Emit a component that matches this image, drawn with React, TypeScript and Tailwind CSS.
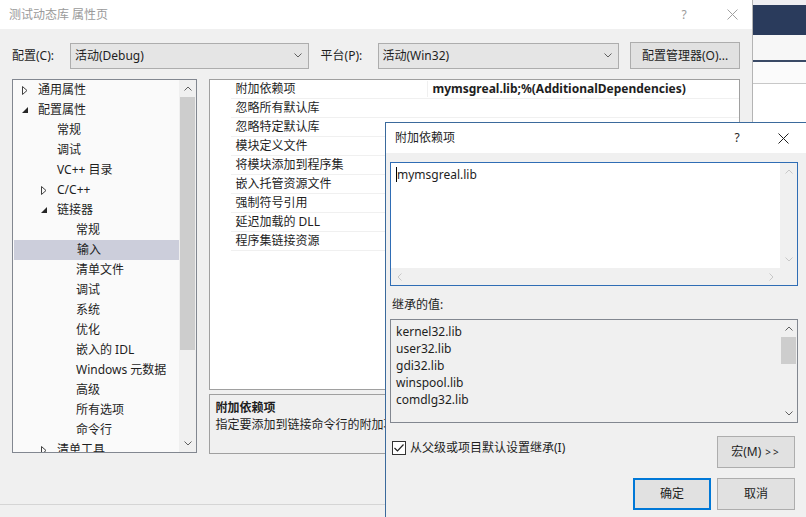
import { ReactNode } from 'react'

type TreeItem = {
    label: string
    level: 0 | 1 | 2
    state?: 'open' | 'closed'
    selected?: boolean
}

const treeItems: TreeItem[] = [
    { label: '通用属性', level: 0, state: 'closed' },
    { label: '配置属性', level: 0, state: 'open' },
    { label: '常规', level: 1 },
    { label: '调试', level: 1 },
    { label: 'VC++ 目录', level: 1 },
    { label: 'C/C++', level: 1, state: 'closed' },
    { label: '链接器', level: 1, state: 'open' },
    { label: '常规', level: 2 },
    { label: '输入', level: 2, selected: true },
    { label: '清单文件', level: 2 },
    { label: '调试', level: 2 },
    { label: '系统', level: 2 },
    { label: '优化', level: 2 },
    { label: '嵌入的 IDL', level: 2 },
    { label: 'Windows 元数据', level: 2 },
    { label: '高级', level: 2 },
    { label: '所有选项', level: 2 },
    { label: '命令行', level: 2 },
    { label: '清单工具', level: 1, state: 'closed' },
]

const indent = ['pl-[6px]', 'pl-[25px]', 'pl-[44px]']

const props = [
    '附加依赖项',
    '忽略所有默认库',
    '忽略特定默认库',
    '模块定义文件',
    '将模块添加到程序集',
    '嵌入托管资源文件',
    '强制符号引用',
    '延迟加载的 DLL',
    '程序集链接资源',
]

const inherited = ['kernel32.lib', 'user32.lib', 'gdi32.lib', 'winspool.lib', 'comdlg32.lib']

function Chevron({ dir, color = '#606060' }: { dir: 'up' | 'down' | 'left' | 'right'; color?: string }) {
    const d = {
        up: 'M0.5 4.5 L4 1 L7.5 4.5',
        down: 'M0.5 0.5 L4 4 L7.5 0.5',
        left: 'M4.5 0.5 L1 4 L4.5 7.5',
        right: 'M0.5 0.5 L4 4 L0.5 7.5',
    }[dir]
    const vertical = dir === 'up' || dir === 'down'
    return (
        <svg width={vertical ? 8 : 5} height={vertical ? 5 : 8} viewBox={vertical ? '0 0 8 5' : '0 0 5 8'}>
            <path d={d} fill="none" stroke={color} strokeWidth="1" />
        </svg>
    )
}

function CloseIcon({ color }: { color: string }) {
    return (
        <svg width="11" height="11" viewBox="0 0 11 11">
            <path d="M0.5 0.5 L10.5 10.5 M10.5 0.5 L0.5 10.5" stroke={color} strokeWidth="1" />
        </svg>
    )
}

function TreeArrow({ state }: { state?: 'open' | 'closed' }) {
    if (state === 'closed')
        return (
            <svg width="6" height="9" viewBox="0 0 6 9">
                <path d="M0.5 0.5 L5 4.5 L0.5 8.5 Z" fill="none" stroke="#404040" strokeWidth="1" />
            </svg>
        )
    if (state === 'open')
        return (
            <svg width="6" height="6" viewBox="0 0 6 6">
                <path d="M6 0 L6 6 L0 6 Z" fill="#262626" />
            </svg>
        )
    return null
}

function Combo({ text, width }: { text: string; width: string }) {
    return (
        <div className={`${width} flex h-[26px] items-center justify-between border border-[#adadad] bg-[#e5e5e5] pl-[4px] pr-[6px]`}>
            <span>{text}</span>
            <Chevron dir="down" />
        </div>
    )
}

function Button({ children, primary }: { children: ReactNode; primary?: boolean }) {
    return (
        <button
            className={
                primary
                    ? 'flex h-[32px] w-[78px] items-center justify-center border-2 border-[#0078d7] bg-[#e1e1e1]'
                    : 'flex h-[32px] w-[78px] items-center justify-center border border-[#adadad] bg-[#e1e1e1]'
            }
        >
            {children}
        </button>
    )
}

function Tree() {
    return (
        <div className="flex h-[374px] w-[186px] border border-[#828790] bg-[#fafafa]">
            <div className="flex-1 overflow-hidden">
                {treeItems.map((item, i) => (
                    <div
                        key={i}
                        className={`flex h-[20px] items-center ${indent[item.level]} ${item.selected ? 'ml-[1px] bg-[#cccedb]' : ''}`}
                    >
                        <span className="flex w-[19px] items-center pl-[3px]">
                            <TreeArrow state={item.state} />
                        </span>
                        <span className="whitespace-nowrap">{item.label}</span>
                    </div>
                ))}
            </div>
            <div className="flex w-[17px] flex-col bg-[#f0f0f0]">
                <div className="flex h-[17px] items-center justify-center">
                    <Chevron dir="up" />
                </div>
                <div className="mx-[1px] h-[253px] bg-[#cdcdcd]" />
                <div className="flex-1" />
                <div className="flex h-[17px] items-center justify-center">
                    <Chevron dir="down" />
                </div>
            </div>
        </div>
    )
}

function PropertyGrid() {
    return (
        <div className="flex w-[532px] flex-col">
            <div className="h-[311px] border border-[#a0a0a0] bg-white pl-[21px]">
                {props.map((p, i) => (
                    <div key={p} className="flex h-[19px] items-center border-b border-[#f0f0f0]">
                        <span className="w-[196px] whitespace-nowrap pl-[4px]">{p}</span>
                        <span className="whitespace-nowrap border-l border-[#f0f0f0] pl-[4px] font-bold">
                            {i === 0 ? 'mymsgreal.lib;%(AdditionalDependencies)' : ''}
                        </span>
                    </div>
                ))}
            </div>
            <div className="mt-[4px] h-[60px] border border-[#a0a0a0] px-[5px] pt-[4px]">
                <div className="font-bold leading-[17px]">附加依赖项</div>
                <div className="leading-[17px] whitespace-nowrap">指定要添加到链接命令行的附加项。</div>
            </div>
        </div>
    )
}

function MainWindow() {
    return (
        <div className="flex h-full w-[753px] flex-col border-r border-[#b4b4b4]">
            <div className="flex h-[29px] items-center bg-white pl-[9px] text-[#9a9a9a]">
                <span>测试动态库 属性页</span>
                <span className="ml-auto w-[10px] text-center">?</span>
                <span className="ml-[38px] mr-[14px] flex">
                    <CloseIcon color="#a0a0a0" />
                </span>
            </div>
            <div className="flex flex-1 flex-col bg-[#f0f0f0] px-[12px]">
                <div className="mt-[13px] flex h-[27px] items-center">
                    <span className="w-[58px]">配置(C):</span>
                    <Combo text="活动(Debug)" width="w-[239px]" />
                    <span className="ml-[12px] w-[57px]">平台(P):</span>
                    <Combo text="活动(Win32)" width="w-[242px]" />
                    <button className="ml-[11px] flex h-[27px] w-[110px] items-center justify-center border border-[#adadad] bg-[#e1e1e1]">
                        配置管理器(O)...
                    </button>
                </div>
                <div className="mt-[10px] flex gap-[12px]">
                    <Tree />
                    <PropertyGrid />
                </div>
                <div className="-mx-[12px] mt-auto h-[13px] border-t border-[#d5d5d5]" />
            </div>
        </div>
    )
}

function Backdrop() {
    return (
        <div className="flex flex-1 flex-col bg-white">
            <div className="h-[5px] bg-[#eeeef2]" />
            <div className="h-[30px] bg-[#2a3b5c]" />
            <div className="h-[25px] bg-[#f7f7f7]" />
            <div className="h-[2px] bg-[#3a4a66]" />
            <div className="h-[21px] bg-[#fbfbfb]" />
            <div className="h-[1px] bg-[#c8c8c8]" />
        </div>
    )
}

function DepsDialog() {
    return (
        <div className="absolute left-[385px] top-[122px] flex h-[400px] w-[430px] flex-col border border-[#3b6a9c] bg-[#f0f0f0]">
            <div className="flex h-[30px] items-center bg-white pl-[9px]">
                <span>附加依赖项</span>
                <span className="ml-auto w-[10px] text-center">?</span>
                <span className="ml-[36px] mr-[25px] flex">
                    <CloseIcon color="#202020" />
                </span>
            </div>
            <div className="flex flex-col px-[4px]">
                <div className="mt-[9px] grid h-[124px] w-[408px] grid-cols-[1fr_17px] grid-rows-[1fr_17px] border border-[#2f6db5] bg-white">
                    <div className="flex items-start pl-[5px] pt-[3px]">
                        <span className="mt-[1px] h-[15px] w-[1px] bg-black" />
                        <span className="leading-[17px]">mymsgreal.lib</span>
                    </div>
                    <div className="flex flex-col items-center justify-between bg-[#f0f0f0] py-[6px]">
                        <Chevron dir="up" color="#c8c8c8" />
                        <Chevron dir="down" color="#c8c8c8" />
                    </div>
                    <div className="flex items-center justify-between bg-[#f0f0f0] px-[6px]">
                        <Chevron dir="left" color="#c8c8c8" />
                        <Chevron dir="right" color="#c8c8c8" />
                    </div>
                    <div className="bg-[#f0f0f0]" />
                </div>
                <div className="mt-[11px] h-[16px] pl-[2px] leading-[16px]">继承的值:</div>
                <div className="mt-[6px] flex h-[104px] w-[408px] border border-[#828790] bg-[#f0f0f0]">
                    <div className="flex-1 pl-[5px] pt-[3px]">
                        {inherited.map(l => (
                            <div key={l} className="flex h-[17px] items-center">
                                {l}
                            </div>
                        ))}
                    </div>
                    <div className="flex w-[17px] flex-col">
                        <div className="flex h-[17px] items-center justify-center">
                            <Chevron dir="up" />
                        </div>
                        <div className="mx-[1px] h-[27px] bg-[#cdcdcd]" />
                        <div className="flex-1" />
                        <div className="flex h-[17px] items-center justify-center">
                            <Chevron dir="down" />
                        </div>
                    </div>
                </div>
                <div className="mt-[13px] flex w-[408px] items-start justify-between pl-[2px] pr-[3px]">
                    <div className="mt-[4px] flex items-center gap-[4px]">
                        <span className="flex h-[14px] w-[14px] items-center justify-center border border-[#333] bg-white">
                            <svg width="10" height="8" viewBox="0 0 10 8">
                                <path d="M0.5 4 L3.5 7 L9.5 0.5" fill="none" stroke="#222" strokeWidth="1.2" />
                            </svg>
                        </span>
                        <span>从父级或项目默认设置继承(I)</span>
                    </div>
                    <Button>
                        宏(M) <span className="ml-[4px] text-[10px] tracking-[2px]">&gt;&gt;</span>
                    </Button>
                </div>
                <div className="mt-[10px] flex w-[408px] justify-end gap-[6px] pr-[3px]">
                    <Button primary>确定</Button>
                    <Button>取消</Button>
                </div>
            </div>
        </div>
    )
}

export default function App() {
    return (
        <div className="relative h-[517px] w-[806px] overflow-hidden bg-white font-['Noto_Sans','Noto_Sans_CJK_SC',sans-serif] text-[12px] leading-[16px] text-[#1e1e1e]">
            <div className="flex h-full">
                <MainWindow />
                <Backdrop />
            </div>
            <DepsDialog />
        </div>
    )
}
